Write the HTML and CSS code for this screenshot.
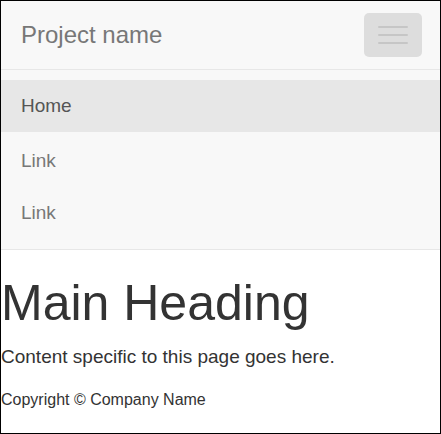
FILE: index.html
```html
<!DOCTYPE html>
<html lang="en">
<head>
<meta charset="utf-8">
<title>Project name</title>
<link rel="stylesheet" href="styles.css">
</head>
<body>
<div class="frame">
  <nav class="navbar">
    <div class="navbar-header">
      <a class="brand" href="#">Project name</a>
      <button class="toggle" type="button" aria-label="Toggle navigation">
        <span class="bar"></span>
        <span class="bar"></span>
        <span class="bar"></span>
      </button>
    </div>
    <ul class="nav">
      <li class="nav-item active"><a href="#">Home</a></li>
      <li class="nav-item"><a href="#">Link</a></li>
      <li class="nav-item"><a href="#">Link</a></li>
    </ul>
  </nav>
  <main class="content">
    <h1 class="heading">Main Heading</h1>
    <p class="lead">Content specific to this page goes here.</p>
    <footer class="footer">Copyright © Company Name</footer>
  </main>
</div>
</body>
</html>
```

FILE: styles.css
```css
html, body {
  margin: 0;
  padding: 0;
  background: #fff;
}

body {
  font-family: "Liberation Sans", Arial, Helvetica, sans-serif;
  color: #333;
}

.frame {
  box-sizing: border-box;
  width: 441px;
  height: 434px;
  border: 1px solid #000;
  overflow: hidden;
}

.navbar {
  background: #f8f8f8;
  border-bottom: 1px solid #e7e7e7;
}

.navbar-header {
  height: 68px;
  display: flex;
  align-items: center;
  justify-content: space-between;
  padding: 0 18px 0 20px;
  border-bottom: 1px solid #e7e7e7;
}

.brand {
  font-size: 24px;
  line-height: 28px;
  color: #777;
  text-decoration: none;
}

.toggle {
  box-sizing: border-box;
  width: 58px;
  height: 44px;
  border: 0;
  border-radius: 5px;
  background: #dddddd;
  padding: 0;
  display: flex;
  flex-direction: column;
  align-items: center;
  justify-content: center;
  gap: 6px;
}

.bar {
  display: block;
  width: 30px;
  height: 2px;
  border-radius: 1px;
  background: #c6c6c6;
}

.nav {
  list-style: none;
  margin: 0;
  padding: 10px 0;
}

.nav-item a {
  display: block;
  padding: 15px 20px;
  font-size: 19px;
  line-height: 22px;
  color: #777;
  text-decoration: none;
}

.nav-item.active {
  margin-bottom: 3px;
}

.nav-item.active a {
  background: #e7e7e7;
  color: #555;
}

.content {
  padding: 0;
}

.heading {
  margin: 26px 0 12px;
  font-size: 50px;
  line-height: 55px;
  font-weight: 500;
  color: #333;
}

.lead {
  margin: 0 0 18px;
  font-size: 19px;
  line-height: 27px;
}

.footer {
  font-size: 16px;
  line-height: 23px;
}
```
